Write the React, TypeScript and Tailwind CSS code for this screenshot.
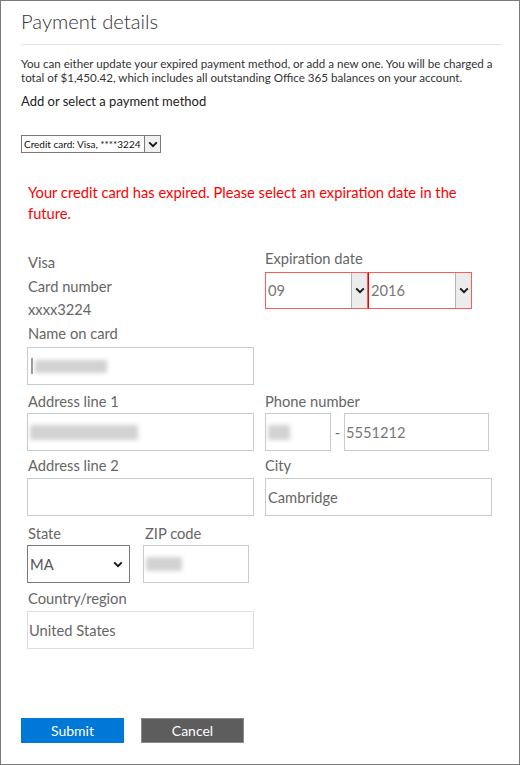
import React from "react";

const Chevron = ({ className = "" }: { className?: string }) => (
  <svg width="10" height="7" viewBox="0 0 10 7" className={className}>
    <path d="M1.2 1.4 L5 5.2 L8.8 1.4" fill="none" stroke="#111" strokeWidth="1.8" />
  </svg>
);

const Blur = ({ w, h = 14, className = "" }: { w: number; h?: number; className?: string }) => (
  <div className={"bg-[#d2d2d2] blur-[2px] " + className} style={{ width: w, height: h }} />
);

export default function App() {
  return (
    <div className="w-[520px] h-[765px] border border-[#7a7a7a] bg-white font-['Lato',sans-serif] text-[#333] pl-[20px] overflow-hidden">
      <h1 className="mt-[6px] text-[20.2px] leading-[28px] font-light text-[#333]">Payment details</h1>
      <div className="mt-[9px] w-[481px] h-px bg-[#e4e4e4]" />
      <p className="mt-[12px] text-[11.6px] leading-[14px] text-[#333] whitespace-nowrap">
        You can either update your expired payment method, or add a new one. You will be charged a
        <br />
        total of $1,450.42, which includes all outstanding Office 365 balances on your account.
      </p>
      <div className="mt-[7px] text-[13px] leading-[18px] text-[#222]">Add or select a payment method</div>
      <div className="mt-[25px] w-[140px] h-[18px] border border-[#7a7a7a] flex items-stretch">
        <div className="flex-1 text-[10px] leading-[16px] pl-[2px] text-[#111] whitespace-nowrap overflow-hidden">
          Credit card: Visa, ****3224
        </div>
        <div className="w-[16px] border-l border-[#7a7a7a] bg-[#f0f0f0] flex items-center justify-center">
          <Chevron />
        </div>
      </div>
      <div className="mt-[29px] pl-[7px] text-[14.7px] leading-[21px] text-[#f00]">
        Your credit card has expired. Please select an expiration date in the
        <br />
        future.
      </div>

      <div className="pl-[6px] text-[14.7px] text-[#666]">
        {/* Row A */}
        <div className="mt-[22px] flex gap-[11px] items-start">
          <div className="w-[227px] pt-[5px]">
            <div className="pl-px leading-[23.5px]">Visa</div>
            <div className="pl-px leading-[23.5px]">Card number</div>
            <div className="pl-px leading-[23.5px]">xxxx3224</div>
            <div className="pl-px leading-[23.5px]">Name on card</div>
            <div className="mt-[2px] h-[38px] border border-[#c6cccc] flex items-center pl-[3px] gap-[2px]">
              <div className="w-[2px] h-[16px] bg-[#999]" />
              <Blur w={72} h={13} />
            </div>
          </div>
          <div className="w-[227px]">
            <div className="leading-[24px]">Expiration date</div>
            <div className="mt-[2px] flex">
              <div className="w-[103px] h-[37px] border border-[#ff5a5a] flex">
                <div className="flex-1 pl-[2px] leading-[35px] text-[#777]">09</div>
                <div className="w-[16px] bg-[#ececec] border-l border-[#b5b5b5] flex items-center justify-center">
                  <Chevron />
                </div>
              </div>
              <div className="w-[104px] h-[37px] border border-[#ff5a5a] border-l-[#e00] flex">
                <div className="flex-1 pl-[2px] leading-[35px] text-[#777]">2016</div>
                <div className="w-[16px] bg-[#ececec] border-l border-[#b5b5b5] flex items-center justify-center">
                  <Chevron />
                </div>
              </div>
            </div>
          </div>
        </div>

        {/* Row B */}
        <div className="mt-[4px] flex gap-[11px] items-start">
          <div className="w-[227px]">
            <div className="pl-px leading-[24px]">Address line 1</div>
            <div className="h-[38px] border border-[#c6cccc] flex items-center pl-[2px]">
              <Blur w={108} h={15} />
            </div>
          </div>
          <div className="w-[227px]">
            <div className="leading-[24px]">Phone number</div>
            <div className="flex items-center">
              <div className="w-[66px] h-[38px] border border-[#c6cccc] flex items-center pl-[2px]">
                <Blur w={22} h={15} />
              </div>
              <div className="w-[13px] text-center text-[#666] leading-[20px]">-</div>
              <div className="w-[145px] h-[38px] border border-[#c6cccc] pl-px leading-[36px] text-[#777]">5551212</div>
            </div>
          </div>
        </div>

        {/* Row C */}
        <div className="mt-[2px] flex gap-[11px] items-start">
          <div className="w-[227px]">
            <div className="pl-px leading-[24px]">Address line 2</div>
            <div className="mt-px h-[38px] border border-[#c6cccc]" />
          </div>
          <div className="w-[227px]">
            <div className="leading-[24px]">City</div>
            <div className="mt-px h-[38px] border border-[#c6cccc] pl-[2px] leading-[36px] text-[#666]">Cambridge</div>
          </div>
        </div>

        {/* Row D */}
        <div className="mt-[5px] flex gap-[13px] items-start">
          <div className="w-[103px]">
            <div className="pl-px leading-[24px]">State</div>
            <div className="h-[38px] border border-[#7a7a7a] flex items-center justify-between pl-[2px] pr-[6px] text-[#555]">
              <span>MA</span>
              <Chevron />
            </div>
          </div>
          <div className="w-[106px]">
            <div className="pl-[2px] leading-[24px]">ZIP code</div>
            <div className="h-[38px] border border-[#c6cccc] flex items-center pl-[2px]">
              <Blur w={36} h={14} />
            </div>
          </div>
        </div>

        {/* Row E */}
        <div className="mt-[3px] w-[227px]">
          <div className="pl-px leading-[24px]">Country/region</div>
          <div className="mt-px h-[38px] border border-[#dcdfdf] pl-px leading-[36px] text-[#666]">United States</div>
        </div>
      </div>

      <div className="mt-[69px] flex gap-[17px]">
        <button className="w-[103px] h-[25px] bg-[#0078d7] text-white text-[14px] leading-[25px]">Submit</button>
        <button className="w-[103px] h-[25px] bg-[#5d5d5d] border border-[#8a8a8a] text-white text-[14px] leading-[23px]">Cancel</button>
      </div>
    </div>
  );
}
